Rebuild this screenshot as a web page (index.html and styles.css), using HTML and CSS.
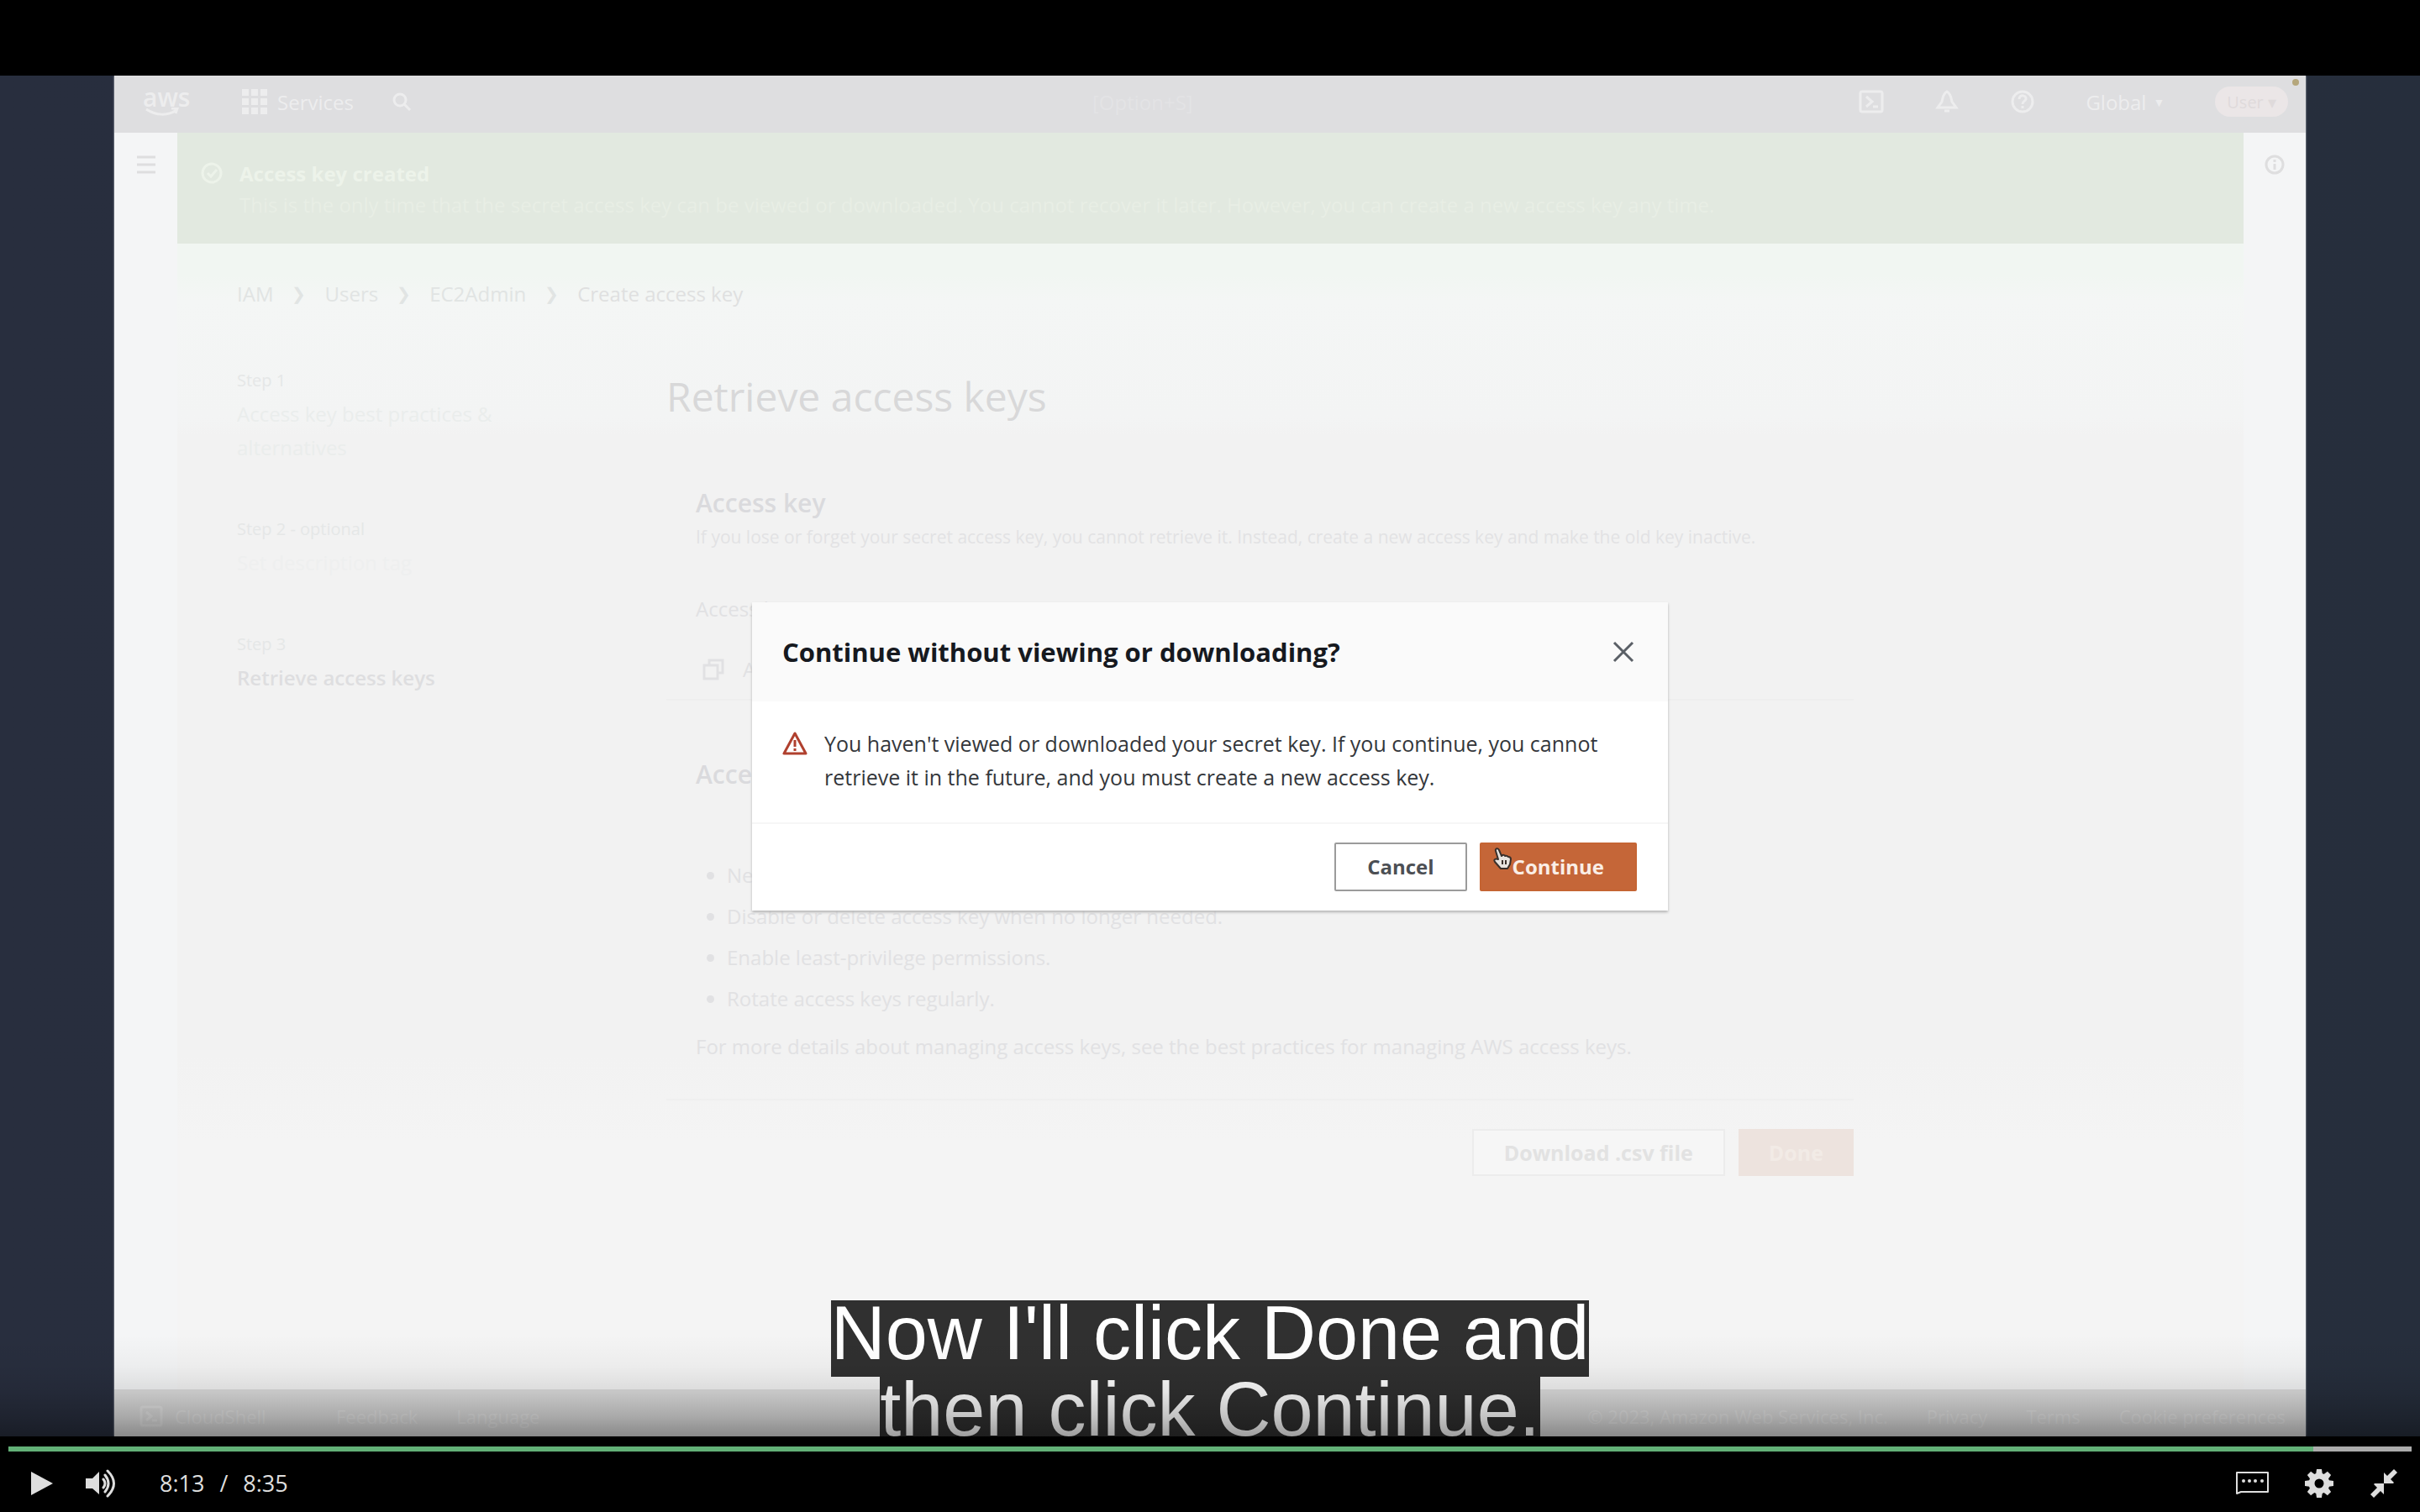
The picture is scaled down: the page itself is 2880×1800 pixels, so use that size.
FILE: index.html
```html
<!DOCTYPE html>
<html lang="en">
<head>
<meta charset="utf-8">
<title>Retrieve access keys</title>
<link rel="stylesheet" href="styles.css">
</head>
<body>
<main class="player">
  <div class="stage">
    <div class="console">
      <header class="topbar">
        <a class="logo" href="#" aria-label="aws home">
          <span>aws</span>
          <svg viewBox="0 0 46 10" width="46" height="10" fill="none" stroke="currentColor" stroke-width="3"><path d="M4 2c12 8 26 8 36 1M34 1l7 0-2 6"/></svg>
        </a>
        <button class="top-button services">
          <svg viewBox="0 0 30 30" width="30" height="30" fill="currentColor"><path d="M0 0h8v8H0zM11 0h8v8h-8zM22 0h8v8h-8zM0 11h8v8H0zM11 11h8v8h-8zM22 11h8v8h-8zM0 22h8v8H0zM11 22h8v8h-8zM22 22h8v8h-8z"/></svg>
          Services
        </button>
        <label class="search">
          <svg viewBox="0 0 24 24" width="24" height="24" fill="none" stroke="currentColor" stroke-width="3"><circle cx="10" cy="10" r="7"/><path d="M15 15l7 7"/></svg>
          <input type="search" placeholder="[Option+S]" aria-label="Search">
        </label>
        <nav class="top-actions">
          <button class="top-button" aria-label="CloudShell"><svg viewBox="0 0 30 30" width="30" height="30" fill="none" stroke="currentColor" stroke-width="3"><rect x="2" y="3" width="26" height="24" rx="2"/><path d="M9 9l7 6-7 6M17 21h6"/></svg></button>
          <button class="top-button" aria-label="Notifications"><svg viewBox="0 0 30 30" width="30" height="30" fill="none" stroke="currentColor" stroke-width="3"><path d="M15 3c-5 3-5 8-6 12l-5 7h22l-5-7c-1-4-1-9-6-12zM12 26h6"/></svg></button>
          <button class="top-button" aria-label="Support"><svg viewBox="0 0 30 30" width="30" height="30" fill="none" stroke="currentColor" stroke-width="3"><circle cx="15" cy="15" r="12"/><path d="M11 12c0-6 9-5 8 0-1 3-4 2-4 6M15 20v3"/></svg></button>
          <button class="top-button region">Global <span class="caret">▼</span></button>
          <button class="top-button account">User ▾</button>
        </nav>
        <span class="rec-dot"></span>
      </header>

      <div class="workspace">
        <aside class="rail">
          <button class="rail-button" aria-label="Open navigation"><svg viewBox="0 0 24 24" width="24" height="24" stroke="currentColor" stroke-width="3"><path d="M1 3h22M1 12h22M1 21h22"/></svg></button>
        </aside>

        <div class="content">
          <section class="banner">
            <svg viewBox="0 0 26 26" width="26" height="26" fill="none" stroke="currentColor" stroke-width="3"><circle cx="13" cy="13" r="11"/><path d="M8 13l4 4 7-8"/></svg>
            <div>
              <h2 class="banner-title">Access key created</h2>
              <p class="banner-text">This is the only time that the secret access key can be viewed or downloaded. You cannot recover it later. However, you can create a new access key any time.</p>
            </div>
          </section>

          <nav class="breadcrumbs">
            <a href="#">IAM</a><span>❯</span><a href="#">Users</a><span>❯</span><a href="#">EC2Admin</a><span>❯</span><span class="current">Create access key</span>
          </nav>

          <div class="wizard">
            <ol class="steps">
              <li><small>Step 1</small><a href="#">Access key best practices &amp; alternatives</a></li>
              <li><small>Step 2 - optional</small><a class="faint" href="#">Set description tag</a></li>
              <li><small>Step 3</small><strong>Retrieve access keys</strong></li>
            </ol>

            <div class="step-body">
              <h1>Retrieve access keys</h1>
              <section class="panel key-panel">
                <h2>Access key</h2>
                <p class="hint">If you lose or forget your secret access key, you cannot retrieve it. Instead, create a new access key and make the old key inactive.</p>
                <h3>Access key</h3>
                <p class="key-row"><svg viewBox="0 0 26 26" width="26" height="26" fill="none" stroke="currentColor" stroke-width="3"><path d="M8 7V2h16v15h-5M2 8h16v16H2z"/></svg>A</p>
              </section>
              <section class="panel">
                <h2>Access key best practices</h2>
                <ul>
                  <li>Never store your access key in plain text.</li>
                  <li>Disable or delete access key when no longer needed.</li>
                  <li>Enable least-privilege permissions.</li>
                  <li>Rotate access keys regularly.</li>
                </ul>
                <p class="more">For more details about managing access keys, see the <a href="#">best practices for managing AWS access keys</a>.</p>
              </section>
              <div class="step-actions">
                <button class="ghost-button">Download .csv file</button>
                <button class="ghost-button done">Done</button>
              </div>
            </div>
          </div>
        </div>

        <aside class="rail">
          <button class="rail-button" aria-label="Info"><svg viewBox="0 0 24 24" width="24" height="24" fill="none" stroke="currentColor" stroke-width="3"><circle cx="12" cy="12" r="10"/><path d="M12 6v3M12 11v7"/></svg></button>
        </aside>
      </div>

      <footer class="bottombar">
        <a class="shell-link" href="#"><svg viewBox="0 0 28 26" width="28" height="26" fill="none" stroke="currentColor" stroke-width="3"><rect x="2" y="2" width="24" height="22" rx="2"/><path d="M8 8l6 5-6 5M15 18h6"/></svg>CloudShell</a>
        <a href="#">Feedback</a>
        <a href="#">Language</a>
        <span class="copyright">© 2023, Amazon Web Services, Inc.</span>
        <a href="#">Privacy</a>
        <a href="#">Terms</a>
        <a href="#">Cookie preferences</a>
      </footer>
    </div>

    <div class="overlay">
      <section class="dialog" role="dialog" aria-labelledby="dialog-title">
        <header class="dialog-head">
          <h2 id="dialog-title">Continue without viewing or downloading?</h2>
          <button class="close" aria-label="Close"><svg viewBox="0 0 26 28" width="26" height="28" stroke="currentColor" stroke-width="3"><path d="M2 3l22 22M24 3L2 25"/></svg></button>
        </header>
        <div class="dialog-body">
          <svg viewBox="0 0 30 30" width="30" height="30" fill="none" stroke="#b0402e" stroke-width="3" stroke-linejoin="round"><path d="M15 3L2 27h26z"/><path d="M15 11v8M15 21v3"/></svg>
          <p>You haven't viewed or downloaded your secret key. If you continue, you cannot retrieve it in the future, and you must create a new access key.</p>
        </div>
        <footer class="dialog-foot">
          <button class="button">Cancel</button>
          <button class="button primary">Continue
            <svg class="cursor" viewBox="0 0 22 26" width="22" height="26" fill="#e8e4e0" stroke="#3a302b" stroke-width="2" stroke-linejoin="round"><path d="M6 14L3 4c-1-3 3-4 4-1l3 7c2-2 4-1 4 0 2-1 3 0 4 1 2 0 3 1 3 3l-1 6-3 5H9L2 17c-2-3 1-4 4-3z"/><path d="M11 15v5M15 15v5"/></svg>
          </button>
        </footer>
      </section>
    </div>

    <div class="captions">
      <span>Now I'll click Done and</span>
      <span>then click Continue.</span>
    </div>
    <div class="shade"></div>
  </div>

  <div class="controls">
    <input class="progress" type="range" min="0" max="515" value="493" aria-label="Seek" style="--played: 95.9%">
    <div class="control-row">
      <button class="control" aria-label="Play"><svg viewBox="0 0 26 28" width="26" height="28" fill="currentColor"><path d="M0 0l26 14L0 28z"/></svg></button>
      <button class="control" aria-label="Volume"><svg viewBox="0 0 38 34" width="38" height="34" fill="none" stroke="currentColor" stroke-width="3" stroke-linecap="round"><path d="M1 11h8L17 3v27L9 23H1z" fill="currentColor" stroke="none"/><path d="M22 12q4 5 0 10M24 7q8 10 0 20M27 2q15 15 0 30"/></svg></button>
      <div class="time"><span>8:13</span><span>/</span><span>8:35</span></div>
      <button class="control captions-button" aria-label="Captions"><svg viewBox="0 0 41 30" width="41" height="30"><path d="M2 27V2h37v23H7z" fill="none" stroke="currentColor" stroke-width="2" stroke-linejoin="round"/><g fill="currentColor"><circle cx="10" cy="12" r="2"/><circle cx="17" cy="12" r="2"/><circle cx="24" cy="12" r="2"/><circle cx="32" cy="12" r="2"/></g></svg></button>
      <button class="control" aria-label="Settings"><svg viewBox="-17 -17 34 34" width="34" height="34" fill="currentColor"><path id="tooth" d="M-4-10l1-7h6l1 7z"/><use href="#tooth" transform="rotate(45)"/><use href="#tooth" transform="rotate(90)"/><use href="#tooth" transform="rotate(135)"/><use href="#tooth" transform="rotate(180)"/><use href="#tooth" transform="rotate(225)"/><use href="#tooth" transform="rotate(270)"/><use href="#tooth" transform="rotate(315)"/><circle r="9" fill="none" stroke="currentColor" stroke-width="7"/></svg></button>
      <button class="control" aria-label="Exit full screen"><svg viewBox="0 0 34 34" width="34" height="34" fill="currentColor"><path d="M17 4l4 4 8-8 4 4-8 8 4 4-1 1H17zM17 17v13l-4-4-8 8-4-4 8-8-4-4 1-1z"/></svg></button>
    </div>
  </div>
</main>
</body>
</html>
```
FILE: styles.css
```css
* { box-sizing: border-box; }

body, h1, h2, h3, p, ul, ol { margin: 0; padding: 0; }

body {
  background: #000;
  font-family: "Open Sans", "Noto Sans", sans-serif;
  font-size: 24px;
}

button, input {
  font: inherit;
  color: inherit;
  border: 0;
  padding: 0;
  margin: 0;
  background: none;
}

a { color: inherit; text-decoration: none; }
ol { list-style: none; }
svg { display: block; flex: none; }

.player { padding-top: 90px; }

.stage {
  position: relative;
  display: flex;
  aspect-ratio: 16 / 9;
  padding: 0 136px;
  overflow: hidden;
  background: linear-gradient(90deg, #282e3e, #262e3c);
}

/* Console behind the dialog */

.console {
  flex: 1;
  display: flex;
  flex-direction: column;
  background: #f3f3f3;
  color: #e1e1e3;
  box-shadow: 0 0 2px #c4c9d0;
}

.topbar {
  position: relative;
  display: flex;
  align-items: center;
  height: 68px;
  padding: 0 21px 6px 34px;
  background: #dedee0;
  color: #ededee;
}

.logo {
  width: 118px;
  font-size: 30px;
  line-height: 24px;
  font-weight: 600;
}

.top-button { display: flex; align-items: center; gap: 12px; }
.services { width: 178px; }

.search {
  flex: 1;
  display: flex;
  align-items: center;
  gap: 810px;
}

.search input { width: 200px; }
.search input::placeholder { color: #e3e3e5; opacity: 1; }

.top-actions { display: flex; align-items: center; gap: 60px; }
.region { gap: 8px; }
.caret { font-size: 14px; }

.account {
  height: 36px;
  padding: 0 14px;
  border-radius: 18px;
  background: #ebe6e7;
  color: #dfdadb;
  font-size: 20px;
}

.rec-dot {
  position: absolute;
  top: 4px;
  right: 8px;
  width: 8px;
  height: 8px;
  border-radius: 4px;
  background: #b5a77c;
}

.workspace {
  flex: 1;
  display: grid;
  grid-template-columns: 75px 1fr 74px;
}

.rail { display: flex; justify-content: center; align-items: flex-start; padding-top: 26px; background: #f4f5f6; color: #dededf; }

.content { background: linear-gradient(#f1f6f2 170px, #f4f6f5 200px, #f3f4f4 340px, #f2f2f2 360px, #f2f2f2 1100px, #f4f4f4 1200px); }

.banner {
  display: flex;
  gap: 20px;
  height: 132px;
  padding: 30px 28px;
  background: #e2e9e0;
  color: #edf3ea;
  line-height: 37px;
}

.banner > svg { margin-top: 5px; }
.banner-title { font-size: 24px; font-weight: 700; }
.banner-text { color: #e8eee5; }

.breadcrumbs {
  display: flex;
  gap: 22px;
  margin: 44px 71px 0;
  line-height: 32px;
  color: #e1e4e3;
}

.breadcrumbs span { font-size: 20px; }
.breadcrumbs .current { font-size: 24px; color: #dfe0e0; }

.wizard {
  display: grid;
  grid-template-columns: 511px minmax(0, 1413px);
  margin: 67px 71px 0;
}

.steps { display: flex; flex-direction: column; gap: 57px; line-height: 40px; }
.steps li { display: flex; flex-direction: column; width: 340px; }
.steps small { font-size: 20px; color: #e5e7e7; }
.steps a { color: #eaedec; }
.steps .faint { color: #eeefef; }
.steps strong { font-weight: 600; color: #dedee0; }

.step-body { padding-top: 9px; line-height: 40px; }
.step-body h1 { font-size: 48px; font-weight: 400; line-height: 60px; color: #d8d8d9; }
.panel { padding: 68px 35px 0; }
.panel h2 { font-size: 30px; font-weight: 600; color: #dadadd; }
.key-panel { padding: 77px 35px 15px; border-bottom: 2px solid #eeeeee; }
.hint { font-size: 21px; color: #e2e2e4; }
.panel h3 { margin-top: 46px; font-size: 24px; font-weight: 400; }
.key-row { display: flex; align-items: center; gap: 22px; margin-top: 32px; padding-left: 8px; }
.panel ul { margin-top: 75px; padding-left: 37px; line-height: 49px; }
.more { margin-top: 13px; }

.step-actions {
  display: flex;
  justify-content: flex-end;
  gap: 16px;
  margin-top: 42px;
  padding-top: 34px;
  border-top: 2px solid #efefef;
}

.ghost-button {
  height: 56px;
  padding: 0 36px;
  border: 2px solid #ececec;
  background: #f6f6f6;
  font-size: 25px;
  font-weight: 700;
  color: #e2e2e2;
}

.ghost-button.done { border: 0; background: #ede3de; color: #f2ebe6; }

.bottombar {
  display: flex;
  align-items: center;
  gap: 46px;
  height: 56px;
  padding: 8px 24px 0 30px;
  background: #dddddd;
  color: #e6e6e6;
  font-size: 22px;
}

.bottombar a { display: flex; align-items: center; gap: 14px; }
.bottombar .shell-link { width: 188px; }
.copyright { margin-left: auto; }

/* Confirmation dialog */

.overlay {
  position: absolute;
  inset: 0;
  display: flex;
  align-items: center;
  justify-content: center;
}

.dialog {
  width: 1090px;
  background: #fff;
  box-shadow: 0 2px 3px #b4b4b4;
}

.dialog-head {
  display: flex;
  align-items: center;
  justify-content: space-between;
  padding: 37px 40px 37px 36px;
  background: #fafafa;
}

.dialog-head h2 { font-size: 31px; font-weight: 700; line-height: 44px; color: #16191f; }
.close { color: #5a5f66; }

.dialog-body {
  display: flex;
  gap: 20px;
  padding: 30px 36px;
  padding-bottom: 34px;
  border-bottom: 2px solid #f6f6f6;
  font-size: 25px;
  line-height: 40px;
  color: #34373b;
}

.dialog-body svg { margin-top: 5px; }

.dialog-foot { display: flex; justify-content: flex-end; gap: 15px; padding: 22px 37px 23px; }

.button {
  position: relative;
  height: 58px;
  padding: 0 37px;
  border: 2px solid #9b9b9b;
  border-radius: 2px;
  font-weight: 700;
  color: #4c4f54;
}

.button.primary { border-color: #c56433; background: #c56638; color: #faeee6; }
.cursor { position: absolute; left: 14px; top: 4px; }

/* Captions and the fade above the controls */

.captions {
  position: absolute;
  top: 90%;
  left: 0;
  right: 0;
  display: flex;
  flex-direction: column;
  align-items: center;
  font-family: "Liberation Sans", Arial, sans-serif;
  font-size: 90px;
  line-height: 78px;
  color: #fff;
}

.captions span { padding-bottom: 13px; background: #303030; white-space: nowrap; }

.shade {
  position: absolute;
  left: 0;
  right: 0;
  bottom: 0;
  height: 120px;
  background: linear-gradient(transparent, rgba(0, 0, 0, .03) 30%, rgba(0, 0, 0, .1) 56%, rgba(0, 0, 0, .23) 80%, rgba(0, 0, 0, .38));
}

/* Player controls */

.controls { padding: 12px 10px 0; color: #dedede; }

.progress {
  display: block;
  appearance: none;
  width: 100%;
  height: 6px;
  background: linear-gradient(90deg, #62b077 var(--played), #ababab var(--played));
}

.progress::-webkit-slider-thumb { appearance: none; width: 0; height: 0; }

.control-row { display: flex; align-items: center; height: 72px; padding: 4px 16px 0 27px; }
.control + .control { margin-left: 38px; }
.time { display: flex; gap: 18px; margin-left: 51px; font-size: 27px; line-height: 32px; }
.control-row .captions-button { margin-left: auto; }
.captions-button + .control { margin-left: 42px; }
.captions-button + .control + .control { margin-left: 43px; }
```
